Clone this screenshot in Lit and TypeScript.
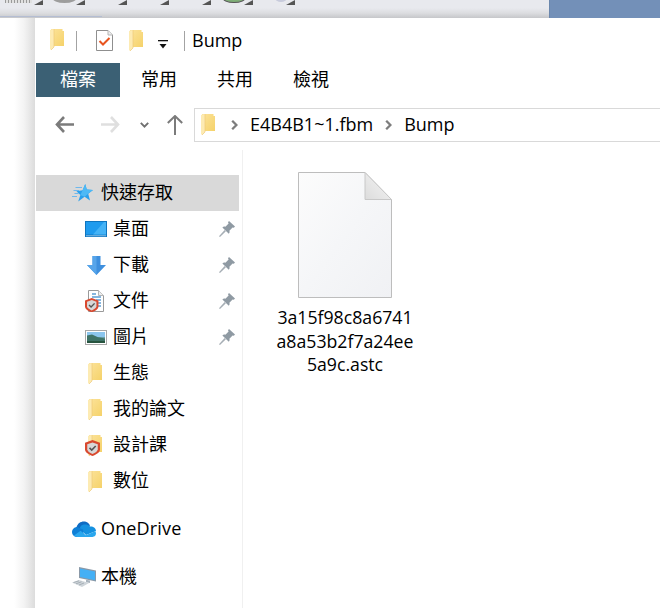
import { LitElement, html, css, svg } from "lit";
import { customElement } from "lit/decorators.js";

const folder = (cls = "folder") => html`<svg class=${cls} viewBox="0 0 14 21" aria-hidden="true">
  <defs><linearGradient id="fg" x1="0" y1="0" x2="1" y2="1"><stop offset="0" stop-color="#fce39a"/><stop offset="1" stop-color="#f5d26a"/></linearGradient></defs>
  <path d="M1 0H12.5V2H14V17H1Z" fill="url(#fg)"/>
  <path d="M0 1L4 0V18L1 21L0 20Z" fill="#fdebb3"/>
  <path d="M4 0V18L1 21" fill="none" stroke="#eec97a" stroke-width=".7"/>
</svg>`;

const shieldPaths = svg`
  <path d="M8 0L16 3V10C16 13 12 15.5 8 17C4 15.5 0 13 0 10V3Z" fill="#d9492f"/>
  <path d="M8 2.5L13.6 4.6V9.8C13.6 11.8 11 13.6 8 14.8C5 13.6 2.4 11.8 2.4 9.8V4.6Z" fill="#d8d8d8"/>
  <path d="M4.8 8.4L7.2 10.8L11.4 6.4" fill="none" stroke="#555" stroke-width="1.7"/>
`;

const chevron = html`<svg class="chev" viewBox="0 0 7 10" aria-hidden="true"><path d="M1.2 .8L5.4 5L1.2 9.2" fill="none" stroke="#7d7d7d" stroke-width="2.3"/></svg>`;

const pin = html`<svg class="pin" viewBox="0 0 16 16" aria-hidden="true">
  <path d="M10 0L16 5.6L14.8 6.8L13.6 6.4L10.4 9.8C10.8 11 10.6 12 9.8 12.8L3.4 6.4C4.2 5.6 5.4 5.4 6.4 5.8L9.6 2.4L9 1.2Z" fill="#8f9aa3"/>
  <path d="M5.6 9L6.9 10.3L1 16L0 15.2Z" fill="#a6aeb5"/>
</svg>`;

const star = html`<svg class="star" viewBox="0 0 21 18" aria-hidden="true">
  <path d="M3.5 3.5H10M1.5 6.5H7M2.5 9.5H6.5M0 12.5H5" stroke="#6fb8ec" stroke-width="1.2"/>
  <path d="M13.2 0L14.8 5.6L21 6L16.2 9.8L18 16.4L12.6 12.8L6.2 17.6L8.4 11L4.4 7.2L10.6 6.2Z" fill="#2aa0ec"/>
  <path d="M13.2 0L14.8 5.6L21 6L16.2 9.8L12.6 12.8L8.4 11L10.6 6.2Z" fill="#4db9f5"/>
</svg>`;

const desktop = html`<svg class="desk" viewBox="0 0 22 16" aria-hidden="true">
  <rect width="22" height="16" fill="#0f75bf"/>
  <rect x="1" y="1" width="20" height="12.5" fill="#1f9bee"/>
  <path d="M8 13.5L19 1H21V13.5Z" fill="#45b3f6"/>
  <rect x="1" y="14.5" width="20" height=".7" fill="#bfe2f8"/>
</svg>`;

const down = html`<svg class="down" viewBox="0 0 19 19" aria-hidden="true">
  <path d="M5.5 0H13.5V9H19L9.5 19L0 9H5.5Z" fill="#3e8fde"/>
  <path d="M5.5 0H9.5V19L0 9H5.5Z" fill="#57a5ea"/>
</svg>`;

const docIcon = html`<svg class="docs" viewBox="0 0 19 22" aria-hidden="true">
  <path d="M3.5 .5H13.5L18.5 5.5V21.5H3.5Z" fill="#fff" stroke="#9a9a9a"/>
  <path d="M13.5 .5V5.5H18.5" fill="#eee" stroke="#b5b5b5"/>
  <path d="M7 4H11M7 7H16M11 10H16M13 13H16M13 16H16" stroke="#5f9fd4" stroke-width="1.3"/>
  <g transform="translate(0 8) scale(.84)">${shieldPaths}</g>
</svg>`;

const picture = html`<svg class="pic" viewBox="0 0 22 15" aria-hidden="true">
  <rect x=".5" y=".5" width="21" height="14" fill="#fff" stroke="#a8a8a8"/>
  <rect x="2" y="2" width="18" height="5.5" fill="#8cc6ee"/>
  <rect x="2" y="7" width="18" height="6" fill="#6aa0a8"/>
  <path d="M2 5.5L7 4.6L13 7.2L20 8.5V13H2Z" fill="#3f7468"/>
  <path d="M2 11H20V13H2Z" fill="#27543f"/>
</svg>`;

const cloud = html`<svg class="cloud" viewBox="0 0 24 16" aria-hidden="true">
  <path d="M4.5 6.5C5.5 2 9.5 0 13 .6C15 1 17 2.4 18 4.6L9 12L3 9Z" fill="#0e6cc4"/>
  <path d="M9 4.8C11.5 2.8 15.5 3 18 5.4C21.5 5.2 24 7.4 24 10L14 14L7.5 7.4Z" fill="#1591e0"/>
  <path d="M5.2 6C2.4 6 0 8.2 0 11C0 13.8 2.2 16 5 16H12L11 8.5Z" fill="#0f7fd6"/>
  <path d="M7 16H20.5C22.6 16 24 14.4 24 12.6C24 11.6 23.7 10.8 23.2 10.2L13.8 14.2L8.6 9.8L2 14.6C3 15.5 4 16 5 16Z" fill="#2aa7ee"/>
</svg>`;

const computer = html`<svg class="pc" viewBox="0 0 24 20" aria-hidden="true">
  <path d="M7 0L24 3.5V14.5L7 11Z" fill="#8a99a8"/>
  <path d="M8 1.5L23 4.6V13.3L8 10Z" fill="#45b0f5"/>
  <path d="M14 12.8L18 13.6V16L14 15.2Z" fill="#a8b3bd"/>
  <path d="M0 15.5L7 13L17 16L10 20Z" fill="#cfd5da"/>
  <path d="M1.5 15.6L7 13.8M4 16.8L9.5 14.8M7 18L12 16" stroke="#9aa4ac" stroke-width=".8"/>
</svg>`;

type Nav = { label: string; icon: unknown; pinned?: boolean };

const pinnedRows: Nav[] = [
  { label: "桌面", icon: desktop, pinned: true },
  { label: "下載", icon: down, pinned: true },
  { label: "文件", icon: docIcon, pinned: true },
  { label: "圖片", icon: picture, pinned: true },
  { label: "生態", icon: folder("folder inset") },
  { label: "我的論文", icon: folder("folder inset") },
  {
    label: "設計課",
    icon: html`<span class="stack">${folder("folder inset")}<svg class="badge" viewBox="0 0 16 17" aria-hidden="true">${shieldPaths}</svg></span>`,
  },
  { label: "數位", icon: folder("folder inset") },
];

@customElement("app-root")
export class AppRoot extends LitElement {
  static styles = css`
    :host {
      display: block;
      width: 660px;
      height: 608px;
      overflow: hidden;
      background: #fff;
      font-family: "Open Sans", "Noto Sans CJK TC", sans-serif;
      font-size: 18px;
      color: #000;
    }
    svg { display: block; flex: none; }
    .strip { height: 18px; display: flex; }
    .behind {
      width: 549px;
      flex: none;
      box-sizing: border-box;
      padding-left: 1px;
      display: flex;
      background: linear-gradient(#e8e9ee 0, #e8e9ee 8px, #dcdde0 13px, #c6c7ca 18px);
      position: relative;
    }
    .behind::after {
      content: "";
      position: absolute;
      left: 0;
      top: 16px;
      width: 102px;
      height: 1px;
      background: #b4bdd2;
    }
    .cell {
      width: 42px;
      height: 5px;
      flex: none;
      display: flex;
      justify-content: flex-end;
      position: relative;
    }
    .tri { width: 9px; height: 5px; }
    .hatch {
      position: absolute;
      left: 4px;
      top: 0;
      width: 27px;
      height: 3px;
      background: repeating-linear-gradient(90deg, #9a9a9a 0 1px, #e0e0e0 1px 3px);
    }
    .blob {
      position: absolute;
      left: 9px;
      top: -8px;
      width: 25px;
      height: 11px;
      border-radius: 50%;
      background: #9d9d9d;
    }
    .blob.green { left: 11px; width: 24px; background: #7fae78; border: 1px solid #555; box-sizing: border-box; }
    .blob.pale { left: 22px; top: -6px; width: 12px; height: 8px; background: #c8cbdc; }
    .desk-bg { flex: 1; background: #7390b8; border-left: 1px solid #6b87ad; }

    .main { display: flex; height: 590px; }
    .gutter {
      width: 35px;
      flex: none;
      background: linear-gradient(90deg, #fff 0, #fff 14px, #f3f3f3 24px, #dcdcdc 35px);
    }
    .window { flex: 1; min-width: 0; display: flex; flex-direction: column; background: #fff; }

    .title {
      height: 45px;
      flex: none;
      display: flex;
      align-items: center;
      box-sizing: border-box;
      padding-left: 15px;
    }
    .folder { width: 14px; height: 21px; }
    .title .first { margin-top: -2px; }
    .sep { width: 1px; height: 20px; background: #a3a3a3; flex: none; }
    .check { width: 17px; height: 21px; }
    .drop { width: 10px; height: 9px; margin-top: 7px; }
    .title .name { margin-left: 7px; line-height: 24px; margin-top: -2px; }

    .tabs {
      height: 36px;
      flex: none;
      display: flex;
      box-sizing: border-box;
      border-bottom: 2px solid #dcddf;
      border-bottom-color: #dcdddf;
      padding-left: 1px;
    }
    .tab {
      width: 76px;
      height: 34px;
      flex: none;
      display: flex;
      align-items: center;
      justify-content: center;
      box-sizing: border-box;
      padding-bottom: 4px;
    }
    .tab.file { width: 84px; margin-right: 1px; background: #3b6074; color: #fff; }

    .toolbar {
      height: 51px;
      flex: none;
      display: flex;
      align-items: center;
      box-sizing: border-box;
      padding-left: 20px;
    }
    .arrow { width: 19px; height: 17px; }
    .up { width: 16px; height: 20px; }
    .small { width: 9px; height: 6px; }
    .address {
      flex: 1;
      height: 34px;
      box-sizing: border-box;
      border: 1px solid #d9d9d9;
      border-right: 0;
      display: flex;
      align-items: center;
      padding-left: 6px;
      margin-left: 11px;
    }
    .chev { width: 7px; height: 10px; }
    .crumb { line-height: 24px; margin-top: -2px; }

    .body { flex: 1; display: flex; min-height: 0; }
    .side {
      width: 208px;
      flex: none;
      box-sizing: border-box;
      border-right: 1px solid #f0f0f0;
      padding-top: 25px;
      display: flex;
      flex-direction: column;
    }
    .row {
      height: 36px;
      flex: none;
      display: flex;
      align-items: center;
      margin: 0 3px 0 1px;
      padding: 0 4px 0 49px;
    }
    .row.top { padding-left: 36px; margin-top: 12px; }
    .row.sel { background: #d9d9d9; margin-top: 0; }
    .slot {
      width: 24px;
      height: 24px;
      flex: none;
      display: flex;
      align-items: center;
      justify-content: flex-start;
    }
    .row .label { margin-left: 4px; line-height: 24px; margin-top: -2px; }
    .row.top .label { margin-left: 5px; }
    .pin { width: 16px; height: 16px; margin-left: auto; }
    .star { width: 21px; height: 18px; }
    .desk { width: 22px; height: 16px; }
    .down { width: 19px; height: 19px; margin-left: 2px; }
    .docs { width: 19px; height: 22px; }
    .pic { width: 22px; height: 15px; }
    .folder.inset { margin-left: 3px; }
    .stack { position: relative; display: block; width: 24px; height: 21px; }
    .badge { position: absolute; left: 0; top: 5px; width: 15px; height: 16px; }
    .cloud { width: 24px; height: 16px; }
    .pc { width: 24px; height: 20px; }
    .onedrive { letter-spacing: .15px; }

    .files { flex: 1; padding: 22px 0 0 32px; }
    .item { width: 140px; display: flex; flex-direction: column; align-items: center; }
    .sheet { width: 94px; height: 126px; }
    .fname { margin-top: 8px; text-align: center; line-height: 23.5px; white-space: nowrap; font-size: 17.7px; }
    .fname span { display: block; }
  `;

  render() {
    return html`
      <div class="strip">
        <div class="behind">
          ${["hatch", "blob", "", "", "", "blob green", "blob pale"].map(
            (k) => html`<div class="cell">
              ${k === "hatch" ? html`<i class="hatch"></i>` : ""}
              ${k.startsWith("blob") ? html`<i class=${k}></i>` : ""}
              <svg class="tri" viewBox="0 0 9 5" aria-hidden="true"><path d="M9 0V5H0Z" fill="#555"/></svg>
            </div>`
          )}
        </div>
        <div class="desk-bg"></div>
      </div>
      <div class="main">
        <div class="gutter"></div>
        <div class="window">
          <div class="title">
            ${folder("folder first")}
            <i class="sep" style="margin-left:12px"></i>
            <svg class="check" style="margin-left:19px" viewBox="0 0 17 21" aria-hidden="true">
              <path d="M.5 .5H12L16.5 5V20.5H.5Z" fill="#fff" stroke="#8f8f8f"/>
              <path d="M12 .5V5H16.5" fill="#eee" stroke="#b5b5b5"/>
              <path d="M3.5 11L7 14.5L13.5 8" fill="none" stroke="#e8541f" stroke-width="2"/>
            </svg>
            <span style="margin-left:16px">${folder()}</span>
            <svg class="drop" style="margin-left:15px" viewBox="0 0 10 9" aria-hidden="true">
              <rect y="0" width="10" height="1.3" fill="#111"/><path d="M1.5 4H8.5L5 8.5Z" fill="#111"/>
            </svg>
            <i class="sep" style="margin-left:16px"></i>
            <span class="name">Bump</span>
          </div>
          <div class="tabs">
            <div class="tab file">檔案</div>
            <div class="tab">常用</div>
            <div class="tab">共用</div>
            <div class="tab">檢視</div>
          </div>
          <div class="toolbar">
            <svg class="arrow" viewBox="0 0 19 17" aria-hidden="true"><path d="M9 1L2 8.5L9 16M2 8.5H19" fill="none" stroke="#7b7b7b" stroke-width="2.6"/></svg>
            <svg class="arrow" style="margin-left:27px" viewBox="0 0 19 17" aria-hidden="true"><path d="M10 1L17 8.5L10 16M17 8.5H0" fill="none" stroke="#dfdfdf" stroke-width="2.6"/></svg>
            <svg class="small" style="margin-left:20px" viewBox="0 0 9 6" aria-hidden="true"><path d="M.8 .8L4.5 4.6L8.2 .8" fill="none" stroke="#707070" stroke-width="1.9"/></svg>
            <svg class="up" style="margin-left:18px" viewBox="0 0 16 20" aria-hidden="true"><path d="M.8 8L8 1L15.2 8M8 1V20" fill="none" stroke="#7b7b7b" stroke-width="2"/></svg>
            <div class="address">
              ${folder()}
              <span style="margin-left:16px">${chevron}</span>
              <span class="crumb" style="margin-left:12px">E4B4B1~1.fbm</span>
              <span style="margin-left:12px">${chevron}</span>
              <span class="crumb" style="margin-left:12px">Bump</span>
            </div>
          </div>
          <div class="body">
            <div class="side">
              <div class="row top sel"><span class="slot">${star}</span><span class="label">快速存取</span></div>
              ${pinnedRows.map(
                (r) => html`<div class="row"><span class="slot">${r.icon}</span><span class="label">${r.label}</span>${r.pinned ? pin : ""}</div>`
              )}
              <div class="row top"><span class="slot">${cloud}</span><span class="label onedrive">OneDrive</span></div>
              <div class="row top"><span class="slot">${computer}</span><span class="label">本機</span></div>
            </div>
            <div class="files">
              <div class="item">
                <svg class="sheet" viewBox="0 0 94 126" aria-hidden="true">
                  <defs><linearGradient id="sh" x1="0" y1="0" x2="1" y2="1"><stop offset="0" stop-color="#fcfcfc"/><stop offset=".5" stop-color="#f5f6f8"/><stop offset="1" stop-color="#f0f1f4"/></linearGradient>
                  <linearGradient id="fd" x1="0" y1="1" x2="1" y2="0"><stop offset="0" stop-color="#dcdcdc"/><stop offset="1" stop-color="#f6f6f6"/></linearGradient></defs>
                  <path d="M.5 .5H67L93.5 27.5V125.5H.5Z" fill="url(#sh)" stroke="#bdbdbd"/>
                  <path d="M67 .5V27.5H93.5Z" fill="url(#fd)" stroke="#c8c8c8"/>
                </svg>
                <div class="fname"><span>3a15f98c8a6741</span><span>a8a53b2f7a24ee</span><span>5a9c.astc</span></div>
              </div>
            </div>
          </div>
        </div>
      </div>
    `;
  }
}
